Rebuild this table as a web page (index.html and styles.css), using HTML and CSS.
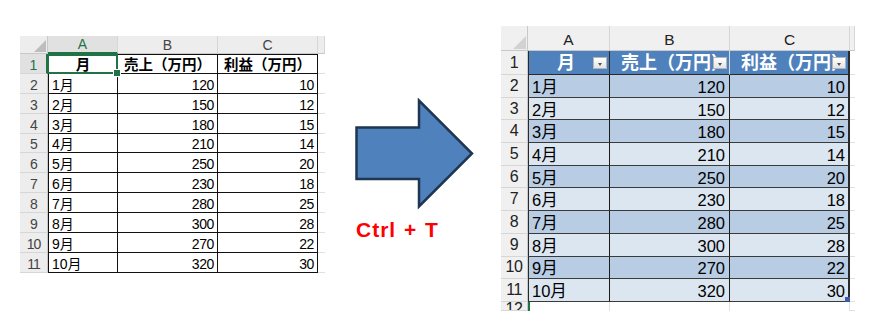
FILE: index.html
```html
<!DOCTYPE html>
<html lang="ja">
<head>
<meta charset="utf-8">
<title>Ctrl + T</title>
<link rel="stylesheet" href="styles.css">
</head>
<body>
<div class="page">
  <div class="sheet sheet-l">
    <div class="corner"><svg class="tri" width="12" height="12" viewBox="0 0 12 12"><path d="M12 0 V12 H0 Z" fill="#BDBDBD"/></svg></div>
    <div class="ch ch-sel">A</div><div class="ch">B</div><div class="ch">C</div><div class="ch"></div>

    <div class="rn rn-sel">1</div><div class="c a top hd sel">月</div><div class="c top hd">売上（万円）</div><div class="c top hd">利益（万円）</div><div class="x"></div>
    <div class="rn">2</div><div class="c a">1月</div><div class="c num">120</div><div class="c num">10</div><div class="x"></div>
    <div class="rn">3</div><div class="c a">2月</div><div class="c num">150</div><div class="c num">12</div><div class="x"></div>
    <div class="rn">4</div><div class="c a">3月</div><div class="c num">180</div><div class="c num">15</div><div class="x"></div>
    <div class="rn">5</div><div class="c a">4月</div><div class="c num">210</div><div class="c num">14</div><div class="x"></div>
    <div class="rn">6</div><div class="c a">5月</div><div class="c num">250</div><div class="c num">20</div><div class="x"></div>
    <div class="rn">7</div><div class="c a">6月</div><div class="c num">230</div><div class="c num">18</div><div class="x"></div>
    <div class="rn">8</div><div class="c a">7月</div><div class="c num">280</div><div class="c num">25</div><div class="x"></div>
    <div class="rn">9</div><div class="c a">8月</div><div class="c num">300</div><div class="c num">28</div><div class="x"></div>
    <div class="rn">10</div><div class="c a">9月</div><div class="c num">270</div><div class="c num">22</div><div class="x"></div>
    <div class="rn">11</div><div class="c a">10月</div><div class="c num">320</div><div class="c num">30</div><div class="x"></div>
  </div>

  <div class="mid">
    <svg class="arrow" width="120" height="112" viewBox="0 0 120 112"><path d="M1.5 29.5 H64 V2.5 L117 55.5 L64 108.5 V81 H1.5 Z" fill="#4F81BD" stroke="#1F3652" stroke-width="2.5"/></svg>
    <div class="key">Ctrl + T</div>
  </div>

  <div class="sheet sheet-r">
    <div class="corner"><svg class="tri" width="13" height="13" viewBox="0 0 13 13"><path d="M13 0 V13 H0 Z" fill="#D2D2D2"/></svg></div>
    <div class="ch">A</div><div class="ch">B</div><div class="ch">C</div><div class="ch"></div>

    <div class="rn">1</div><div class="th a th-a">月<span class="flt"></span></div><div class="th th-b">売上（万円）<span class="flt"></span></div><div class="th th-c">利益（万円）<span class="flt"></span></div><div class="x"></div>
    <div class="rn">2</div><div class="c a d1">1月</div><div class="c num d1">120</div><div class="c num d1 last">10</div><div class="x"></div>
    <div class="rn">3</div><div class="c a d2">2月</div><div class="c num d2">150</div><div class="c num d2 last">12</div><div class="x"></div>
    <div class="rn">4</div><div class="c a d1">3月</div><div class="c num d1">180</div><div class="c num d1 last">15</div><div class="x"></div>
    <div class="rn">5</div><div class="c a d2">4月</div><div class="c num d2">210</div><div class="c num d2 last">14</div><div class="x"></div>
    <div class="rn">6</div><div class="c a d1">5月</div><div class="c num d1">250</div><div class="c num d1 last">20</div><div class="x"></div>
    <div class="rn">7</div><div class="c a d2">6月</div><div class="c num d2">230</div><div class="c num d2 last">18</div><div class="x"></div>
    <div class="rn">8</div><div class="c a d1">7月</div><div class="c num d1">280</div><div class="c num d1 last">25</div><div class="x"></div>
    <div class="rn">9</div><div class="c a d2">8月</div><div class="c num d2">300</div><div class="c num d2 last">28</div><div class="x"></div>
    <div class="rn">10</div><div class="c a d1">9月</div><div class="c num d1">270</div><div class="c num d1 last">22</div><div class="x"></div>
    <div class="rn">11</div><div class="c a d2">10月</div><div class="c num d2">320</div><div class="c num d2 last handle">30</div><div class="x"></div>
    <div class="rn rn-cut">12</div><div class="e e-sel"></div><div class="e"></div><div class="e"></div><div class="x"></div>
  </div>
</div>
</body>
</html>
```

FILE: styles.css
```css
* { box-sizing: border-box; }

body {
  margin: 0;
  background: #ffffff;
  font-family: "Liberation Sans", "Noto Sans CJK JP", sans-serif;
  color: #000;
}

.page {
  display: flex;
  align-items: flex-start;
  width: 869px;
  height: 320px;
  overflow: hidden;
}

.sheet {
  display: grid;
}

.sheet-l {
  margin: 36px 0 0 20px;
  grid-template-columns: 28px 70px 100px 100px 7px;
  grid-template-rows: 18px repeat(11, 19.9px);
  font-size: 14px;
}

.sheet-r {
  margin-top: 26px;
  grid-template-columns: 27px 82px 120px 120px 5px;
  grid-template-rows: 25px 24px repeat(10, 22.7px) 9px;
  font-size: 16.5px;
  overflow: hidden;
}

/* headers */
.corner {
  background: #EDEDED;
  border-right: 1px solid #C8C8C8;
  border-bottom: 1px solid #C8C8C8;
  display: flex;
  align-items: flex-end;
  justify-content: flex-end;
  padding: 0 1px 1px 0;
}
.tri { display: block; }

.ch {
  background: #EDEDED;
  border-right: 1px solid #D6D6D6;
  border-bottom: 1px solid #C8C8C8;
  color: #444;
  display: flex;
  align-items: center;
  justify-content: center;
  font-size: 14px;
  line-height: 16px;
}
.ch-sel {
  background: #E1E1E1;
  color: #217346;
  border-bottom: 2px solid #217346;
}

.rn {
  background: #EDEDED;
  border-right: 1px solid #C8C8C8;
  border-bottom: 1px solid #D6D6D6;
  color: #444;
  display: flex;
  align-items: flex-end;
  justify-content: center;
  font-size: 14px;
  line-height: 16px;
  letter-spacing: -1px;
}
.rn-sel {
  background: #E1E1E1;
  color: #217346;
  border-right: 2px solid #217346;
}

/* cells */
.c {
  border-right: 1px solid #111;
  border-bottom: 1px solid #111;
  display: flex;
  align-items: flex-end;
  padding: 0 3px;
  line-height: 16px;
  white-space: nowrap;
  overflow: hidden;
}
.c.a { border-left: 1px solid #111; }
.c.top { border-top: 1px solid #111; }
.num { justify-content: flex-end; letter-spacing: -0.4px; }
.hd {
  justify-content: center;
  font-weight: bold;
  font-size: 14.5px;
  padding: 0;
}

.x {
  border-bottom: 1px solid #E0E0E0;
  background: #fff;
}

.sel { position: relative; overflow: visible; }
.sel::before {
  content: "";
  position: absolute;
  top: -1px;
  left: -2px;
  right: -1px;
  bottom: -1px;
  border: 2px solid #217346;
  z-index: 1;
}
.sel::after {
  content: "";
  position: absolute;
  right: -4px;
  bottom: -4px;
  width: 6px;
  height: 6px;
  background: #217346;
  border: 1px solid #fff;
  z-index: 2;
}

/* middle: arrow + shortcut */
.mid {
  width: 176px;
  padding: 98px 0 0 30px;
  display: flex;
  flex-direction: column;
}
.arrow { display: block; }
.key {
  margin: 9px 0 0 1px;
  color: #FF0000;
  font-family: "Liberation Sans", sans-serif;
  font-weight: bold;
  font-size: 21px;
  line-height: 22px;
  letter-spacing: 1px;
  word-spacing: 1px;
}

/* right sheet */
.sheet-r .ch {
  font-size: 15.5px;
  color: #222;
  align-items: flex-end;
  padding-bottom: 2px;
  background: #F0F0F0;
}
.sheet-r .corner { background: #F0F0F0; }
.sheet-r .rn {
  font-size: 16px;
  color: #222;
  align-items: center;
  line-height: 18px;
  background: #F0F0F0;
  letter-spacing: -0.5px;
}
.sheet-r .c {
  align-items: center;
  padding: 2px 4px 0 4px;
  line-height: 18px;
  border-right: 1px solid #1c1c1c;
  border-bottom: 1px solid #3a3a3a;
}
.sheet-r .c.a { border-left: 1px solid #2a2a2a; padding-left: 3px; }
.sheet-r .num { letter-spacing: 0; }
.sheet-r .c.last { border-right: 2px solid #2a2a2a; padding-right: 3px; }

.th {
  position: relative;
  background: #4F81BD;
  color: #fff;
  font-weight: bold;
  font-size: 18px;
  line-height: 20px;
  display: flex;
  align-items: center;
  justify-content: flex-start;
  white-space: nowrap;
  overflow: hidden;
  border-right: 1px solid #D0DCEC;
  border-bottom: 1px solid #2a2a2a;
  padding: 1px 0 0 11px;
}
.th.a { border-left: 1px solid #2a2a2a; padding-left: 28px; }
.th-a { border-right: 1px solid #2a2a2a; }
.th-c { border-right: 2px solid #2a2a2a; }

.flt {
  position: absolute;
  right: 2px;
  top: 6px;
  width: 14px;
  height: 12px;
  background: linear-gradient(#ffffff, #e4e4e4);
  border: 1px solid #b5b5b5;
}
.flt::after {
  content: "";
  position: absolute;
  left: 4px;
  top: 5px;
  border-top: 3px solid #555;
  border-left: 2.5px solid transparent;
  border-right: 2.5px solid transparent;
}

.d1 { background: #B8CCE4; }
.d2 { background: #DCE6F1; }

.handle { position: relative; overflow: visible; }
.handle::after {
  content: "";
  position: absolute;
  right: -2px;
  bottom: -1px;
  width: 5px;
  height: 5px;
  background: #3B5BA8;
}

.e {
  background: #fff;
  border-right: 1px solid #E0E0E0;
}
.e-sel { border-left: 2px solid #217346; }
.rn-cut {
  align-items: flex-start;
  padding-top: 6px;
  overflow: hidden;
}
```
